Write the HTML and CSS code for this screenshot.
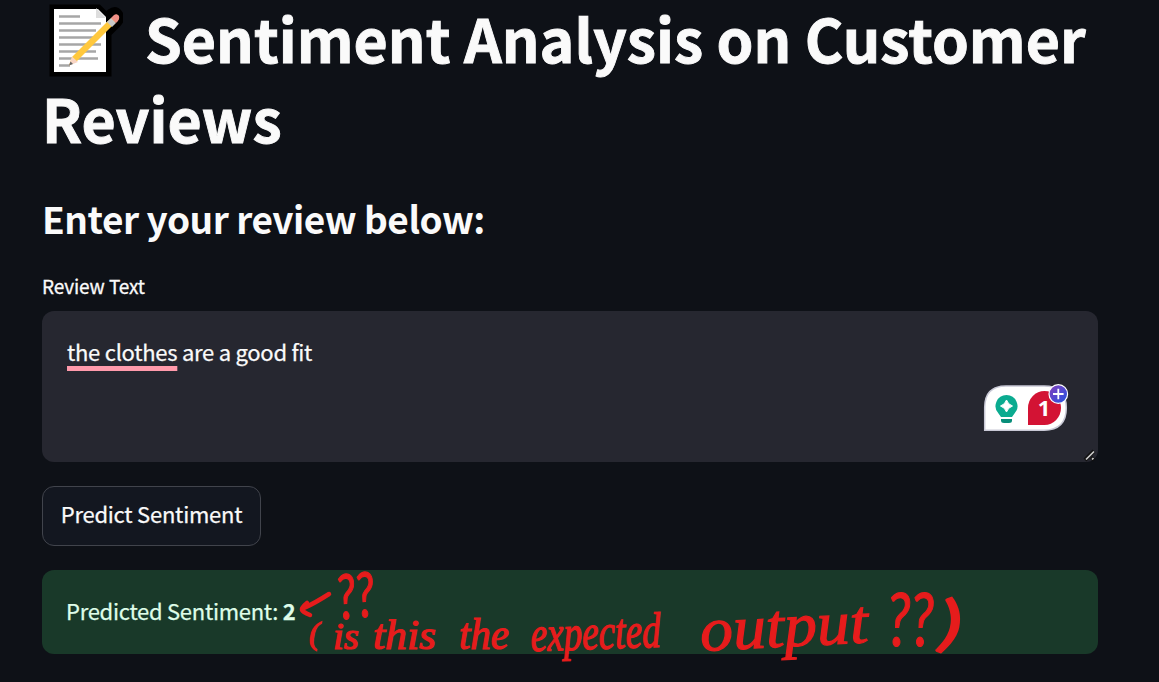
FILE: index.html
```html
<!DOCTYPE html>
<html lang="en">
<head>
<meta charset="utf-8">
<title>Sentiment Analysis on Customer Reviews</title>
<link rel="stylesheet" href="styles.css">
</head>
<body>
<main class="app">
  <h1 class="title"><svg class="memo" viewBox="0 0 78 78" aria-hidden="true">
    <path d="M9 9H53L61 17 66 13Q71 9 74 15 76 19 72 23L62 33V72H9Z" fill="#fff" stroke="#000" stroke-width="9"/>
    <path d="M9 9H53L61 17V72H9Z" fill="#fff"/>
    <path d="M51 8V18H61Z" fill="#ddd"/>
    <path d="M14 16.5H35M14 23.5H56M14 30.5H51M14 37.5H49M14 44.5H56M14 51.5H51M14 58.5H53M14 65.5H25" stroke="#a6a6a6" stroke-width="2.4"/>
    <path d="M24 65.5L27 57 62 22 70 15Q74 14 74 19L67 26 32 61Z" fill="#ffc83d"/>
    <path d="M24 65.5L27 56.500L33 62Z" fill="#f8d5c4"/>
    <path d="M24 65.500L25.500 61.500 28 64Z" fill="#666"/>
    <path d="M62 22L66 18 71 23 67 27Z" fill="#c8c8c8"/>
    <path d="M66 18L69 15Q72 13 74 16 75 18 73 21L71 23Z" fill="#f08f85"/>
  </svg><span>Sentiment Analysis on Customer</span><br><span>Reviews</span></h1>
  <h3 class="subtitle">Enter your review below:</h3>
  <label class="label">Review Text</label>
  <div class="field">
    <span class="flagged">the clothes</span> are a good fit
    <svg class="assistant" viewBox="0 0 90 52" aria-hidden="true">
      <defs><linearGradient id="plus" x1="0" y1="0" x2="1" y2="1"><stop offset="0" stop-color="#8742b8"/><stop offset=".6" stop-color="#4b4ad4"/><stop offset="1" stop-color="#1e55e0"/></linearGradient></defs>
      <path d="M4.700 48.300V25.500Q4.700 4 26 4H64Q86.300 4 86.300 26T64 48.300Z" fill="#fff" stroke="#c9c9d6" stroke-width="1.500"/>
      <path d="M26.500 13a11 11 0 0 1 8 18.500L32 35H21L18.500 31.500A11 11 0 0 1 26.500 13Z" fill="#0bab90"/>
      <path d="M21 37H32V38.500Q32 41 29 41H24Q21 41 21 38.500Z" fill="#078d79"/>
      <path d="M26.500 18Q28 22.500 32.500 24 28 25.500 26.500 30 25 25.500 20.500 24 25 22.500 26.500 18Z" fill="#fff" stroke="#fff"/>
      <path d="M48 43V26A16.500 17 0 0 1 81 26 16.500 17 0 0 1 64.500 43Z" fill="#d31334"/>
      <text x="64" y="34" class="count">1</text>
      <circle cx="78.300" cy="12" r="9.300" fill="url(#plus)" stroke="#fff" stroke-width="1.200"/>
      <path d="M73 12H83.600M78.300 6.700V17.300" stroke="#fff" stroke-width="1.800"/>
    </svg>
    <svg class="grip" viewBox="0 0 14 14" aria-hidden="true"><path d="M2 12L11 3M8.500 12L11 9.500" stroke="#111" stroke-width="4"/><path d="M3 11.500L11 3.500M9 11.500L10.500 10" stroke="#ccc" stroke-width="1.700"/></svg>
  </div>
  <button class="predict">Predict Sentiment</button>
  <div class="result">Predicted Sentiment: <strong>2</strong></div>
</main>
<svg class="note" viewBox="0 0 680 122">
  <path d="M39 34Q25 43 14 48M17 43Q11 48 12 50T20 55" fill="none" stroke="#e61c1c" stroke-width="4.500" stroke-linecap="round" stroke-linejoin="round"/>
  <text x="47" y="58" class="mark" font-size="62" textLength="38" lengthAdjust="spacingAndGlyphs" transform="rotate(-6 65 40)">??</text>
  <text x="19" y="84" class="ink" font-size="32">(</text>
  <text x="43" y="89" class="ink" font-size="38" textLength="26" lengthAdjust="spacingAndGlyphs">is</text>
  <text x="83" y="89" class="ink" font-size="42" textLength="63" lengthAdjust="spacingAndGlyphs">this</text>
  <text x="169" y="89" class="ink" font-size="44" textLength="50" lengthAdjust="spacingAndGlyphs">the</text>
  <text x="241" y="91" class="ink" font-size="50" textLength="130" lengthAdjust="spacingAndGlyphs" transform="rotate(-2 250 90)">expected</text>
  <text x="411" y="91" class="ink" font-size="62" textLength="168" lengthAdjust="spacingAndGlyphs" transform="rotate(-3 411 89)">output</text>
  <text x="597" y="86" class="mark" font-size="74" textLength="47" lengthAdjust="spacingAndGlyphs">??</text>
  <text x="648" y="84" class="mark" font-size="60" textLength="25" lengthAdjust="spacingAndGlyphs">)</text>
</svg>
</body>
</html>
```
FILE: styles.css
```css
body {
  margin: 0;
  height: 682px;
  overflow: hidden;
  position: relative;
  background: #0e1117;
  color: #fafafa;
  font-family: "Noto Sans CJK SC", "Noto Sans", sans-serif;
}
.app {
  display: flex;
  flex-direction: column;
  align-items: flex-start;
  width: 1056px;
  padding-left: 42px;
}
.title {
  margin: -2px 0 0;
  height: 156px;
  font-size: 59px;
  font-weight: 700;
  line-height: 79px;
  white-space: nowrap;
  -webkit-text-stroke: 0.9px #fafafa;
}
.memo {
  width: 78px;
  height: 78px;
  margin: 2px 22px 0 3px;
  vertical-align: top;
}
.subtitle {
  margin: 39px 0 0;
  font-size: 37px;
  font-weight: 700;
  line-height: 50px;
  letter-spacing: -0.49px;
}
.label {
  margin-top: 28px;
  font-size: 19px;
  line-height: 30px;
  letter-spacing: -0.12px;
  -webkit-text-stroke: 0.3px #fafafa;
}
.field {
  position: relative;
  box-sizing: border-box;
  width: 100%;
  height: 151px;
  margin-top: 10px;
  padding: 22px 25px;
  border-radius: 12px;
  background: #262730;
  font-size: 22px;
  line-height: 36px;
  letter-spacing: -0.27px;
  -webkit-text-stroke: 0.25px #fafafa;
}
.flagged {
  text-decoration: underline #ff9aab 5px;
  text-decoration-skip-ink: none;
  text-underline-offset: 5px;
}
.assistant {
  position: absolute;
  right: 28px;
  top: 71px;
  width: 90px;
  height: 52px;
}
.count {
  font: 700 22px "Open Sans", sans-serif;
  fill: #fff;
  text-anchor: middle;
}
.grip {
  position: absolute;
  right: 1px;
  bottom: 0;
  width: 14px;
  height: 14px;
}
.predict {
  box-sizing: border-box;
  width: 219px;
  height: 60px;
  margin-top: 24px;
  padding: 0 0 7px;
  border: 1px solid #41444c;
  border-radius: 12px;
  background: #131720;
  color: #fafafa;
  font: 22px/50px "Noto Sans CJK SC", "Noto Sans", sans-serif;
  letter-spacing: -0.24px;
  -webkit-text-stroke: 0.25px #fafafa;
}
.result {
  box-sizing: border-box;
  width: 100%;
  height: 84px;
  margin-top: 24px;
  padding: 22px 24px;
  border-radius: 12px;
  background: #193929;
  color: #dffde9;
  font-size: 22px;
  line-height: 36px;
  letter-spacing: -0.28px;
  -webkit-text-stroke: 0.25px #dffde9;
}
.note {
  position: absolute;
  left: 290px;
  top: 560px;
  width: 680px;
  height: 122px;
  overflow: visible;
}
.ink,
.mark {
  fill: #e61c1c;
  stroke: #e61c1c;
  stroke-width: 1.2px;
  font-family: "Liberation Serif", serif;
  font-style: italic;
}
.mark {
  font-family: Lato, sans-serif;
}
```
